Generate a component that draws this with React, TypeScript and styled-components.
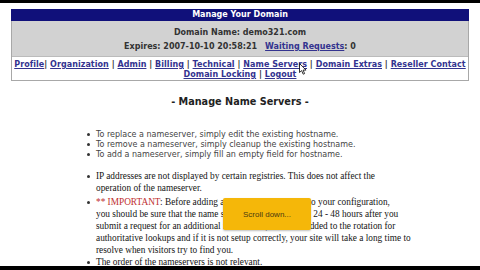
import React from "react";
import styled, { createGlobalStyle } from "styled-components";

const Global = createGlobalStyle`
  html, body { margin: 0; padding: 0; background: #000; }
  #root { width: 480px; height: 270px; overflow: hidden; }
`;

const Screen = styled.div`
  position: relative;
  margin-top: 3px;
  width: 480px;
  height: 263px;
  background: #fff;
  overflow: hidden;
  padding-top: 6px;
  box-sizing: border-box;
`;

const Panel = styled.div`
  margin: 0 0 0 11px;
  width: 458px;
  border: 1px solid #a8a8a8;
  border-top: none;
  box-sizing: border-box;
  font-family: "DejaVu Sans", Verdana, sans-serif;
  font-weight: bold;
  font-size: 8px;
`;

const TitleBar = styled.div`
  height: 12px;
  line-height: 12px;
  background: #10107a;
  color: #fff;
  text-align: center;
  margin: 0 -1px;
`;

const Info = styled.div`
  background: #d2d2d2;
  color: #333;
  height: 35px;
  padding-top: 5px;
  box-sizing: border-box;
  text-align: center;
  line-height: 14px;
`;

const InfoLine = styled.div`
  white-space: nowrap;
`;

const Gap = styled.span<{ w: number }>`
  display: inline-block;
  width: ${(p) => p.w}px;
`;

const Link = styled.a`
  color: #33338f;
  text-decoration: underline;
`;

const Nav = styled.div`
  padding: 3px 0 0;
  height: 24px;
  box-sizing: border-box;
  text-align: center;
  line-height: 10px;
  color: #333;
  white-space: nowrap;
  border-top: 1px solid #bbb;
  letter-spacing: 0.05px;
`;

const Content = styled.div`
  padding-top: 14px;
`;

const Heading = styled.h2`
  margin: 0;
  text-align: center;
  font-family: "DejaVu Sans", Verdana, sans-serif;
  font-size: 9.7px;
  font-weight: bold;
  line-height: 14px;
  color: #222;
`;

const List = styled.ul<{ serif?: boolean }>`
  list-style: none;
  margin: ${(p) => (p.serif ? "10px" : "21px")} 0 0 96px;
  padding: 0;
  font-family: ${(p) =>
    p.serif ? `"Liberation Serif", "Times New Roman", serif` : `"DejaVu Sans", Verdana, sans-serif`};
  font-size: ${(p) => (p.serif ? "9.3px" : "8px")};
  line-height: ${(p) => (p.serif ? "12px" : "10px")};
  color: ${(p) => (p.serif ? "#141414" : "#444")};
  white-space: nowrap;
`;

const Item = styled.li<{ spaced?: boolean }>`
  margin-top: ${(p) => (p.spaced ? "2px" : "0")};
  &::before {
    content: "";
    display: inline-block;
    width: 3px;
    height: 3px;
    border-radius: 50%;
    background: #333;
    margin-left: -9px;
    margin-right: 6px;
    vertical-align: middle;
  }
`;

const Important = styled.span`
  color: #c03030;
`;

const Toast = styled.div`
  position: absolute;
  left: 223px;
  top: 195px;
  width: 88px;
  height: 32px;
  background: #f5b709;
  border-radius: 2px;
  box-shadow: 0 1px 2px rgba(0, 0, 0, 0.25);
  display: flex;
  align-items: center;
  justify-content: center;
  font-family: "Liberation Sans", Arial, sans-serif;
  font-size: 8px;
  color: #4a3a10;
`;

const Cursor = styled.svg`
  position: absolute;
  left: 299px;
  top: 60px;
`;

export default function App() {
  return (
    <>
      <Global />
      <Screen>
        <Panel>
          <TitleBar>Manage Your Domain</TitleBar>
          <Info>
            <InfoLine>Domain Name: demo321.com</InfoLine>
            <InfoLine>
              Expires: 2007-10-10 20:58:21
              <Gap w={8} />
              <Link>Waiting Requests</Link>: 0
            </InfoLine>
          </Info>
          <Nav>
            <Link>Profile</Link>| <Link>Organization</Link> | <Link>Admin</Link> |{" "}
            <Link>Billing</Link> | <Link>Technical</Link> | <Link>Name Servers</Link> |{" "}
            <Link>Domain Extras</Link> | <Link>Reseller Contact</Link>
            <br />
            <Link>Domain Locking</Link> | <Link>Logout</Link>
          </Nav>
        </Panel>
        <Content>
          <Heading>- Manage Name Servers -</Heading>
          <List>
            <Item>To replace a nameserver, simply edit the existing hostname.</Item>
            <Item>To remove a nameserver, simply cleanup the existing hostname.</Item>
            <Item>To add a nameserver, simply fill an empty field for hostname.</Item>
          </List>
          <List serif>
            <Item>
              IP addresses are not displayed by certain registries. This does not affect the
              <br />
              operation of the nameserver.
            </Item>
            <Item spaced>
              <Important>** IMPORTANT</Important>: Before adding additional nameservers to your
              configuration,
              <br />
              you should be sure that the name server is setup correctly. 24 - 48 hours after you
              <br />
              submit a request for an additional nameserver, it will be added to the rotation for
              <br />
              authoritative lookups and if it is not setup correctly, your site will take a long time to
              <br />
              resolve when visitors try to find you.
            </Item>
            <Item>The order of the nameservers is not relevant.</Item>
          </List>
        </Content>
        <Toast>Scroll down...</Toast>
        <Cursor width="8" height="12" viewBox="0 0 8 12">
          <path d="M0.5 0.5 L0.5 9.5 L2.6 7.6 L4.2 11.2 L5.6 10.6 L4.1 7.1 L7 7.1 Z" fill="#fff" stroke="#000" strokeWidth="0.8" />
        </Cursor>
      </Screen>
    </>
  );
}
